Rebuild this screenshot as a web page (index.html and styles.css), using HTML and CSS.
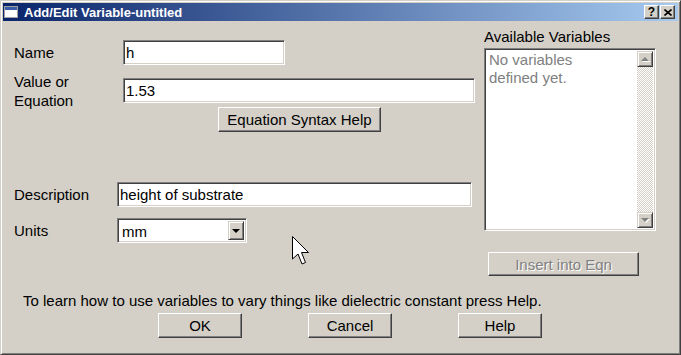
FILE: index.html
```html
<!DOCTYPE html>
<html lang="en">
<head>
    <meta charset="UTF-8">
    <meta name="viewport" content="width=device-width, initial-scale=1.0">
    <title>Add/Edit Variable-untitled</title>
    <link rel="stylesheet" href="styles.css">
</head>
<body>
    <div class="window">
        <!-- Barre de titre -->
        <div class="titlebar">
            <svg class="app-icon" width="14" height="12" viewBox="0 0 14 12">
                <rect x="0.5" y="0.5" width="13" height="11" fill="#fff" stroke="#a0a0a0"/>
                <rect x="1" y="1" width="12" height="3" fill="#3a5fa8"/>
            </svg>
            <span class="title">Add/Edit Variable-untitled</span>
            <div class="title-buttons">
                <button class="tb-btn tb-help">?</button>
                <button class="tb-btn">
                    <svg width="8" height="7" viewBox="0 0 8 7">
                        <path d="M0.5 0.5 L7.5 6.5 M7.5 0.5 L0.5 6.5" stroke="#000" stroke-width="1.6"/>
                    </svg>
                </button>
            </div>
        </div>

        <div class="main">
            <!-- Formulaire -->
            <div class="form">
                <div class="field-row">
                    <label class="label">Name</label>
                    <input class="field name-field" value="h">
                </div>
                <div class="field-row value-row">
                    <label class="label two-lines">Value or<br>Equation</label>
                    <input class="field value-field" value="1.53">
                </div>
                <div class="syntax-row">
                    <button class="btn syntax-btn">Equation Syntax Help</button>
                </div>
                <div class="field-row desc-row">
                    <label class="label short">Description</label>
                    <input class="field desc-field" value="height of substrate">
                </div>
                <div class="field-row units-row">
                    <label class="label short">Units</label>
                    <div class="select">
                        <span class="select-value">mm</span>
                        <span class="select-btn"><span class="arrow-down"></span></span>
                    </div>
                </div>
            </div>

            <!-- Variables disponibles -->
            <div class="vars">
                <div class="vars-label">Available Variables</div>
                <div class="listbox">
                    <div class="list-text">No variables<br>defined yet.</div>
                    <div class="scrollbar">
                        <span class="sb-btn"><span class="arrow-up gray"></span></span>
                        <span class="sb-track"></span>
                        <span class="sb-btn"><span class="arrow-down gray"></span></span>
                    </div>
                </div>
                <button class="btn insert-btn" disabled>Insert into Eqn</button>
            </div>
        </div>

        <p class="hint">To learn how to use variables to vary things like dielectric constant press Help.</p>

        <div class="actions">
            <button class="btn action-btn">OK</button>
            <button class="btn action-btn">Cancel</button>
            <button class="btn action-btn">Help</button>
        </div>

        <!-- Pointeur de souris -->
        <svg class="cursor" width="19" height="30" viewBox="0 0 19 30">
            <path d="M0.5 0.5 L0.5 23 L6 18 L10 28 L13.5 26.5 L9.5 16.5 L16.5 16.5 Z" fill="#fff" stroke="#000" stroke-width="1"/>
        </svg>
    </div>
</body>
</html>
```

FILE: styles.css
```css
* {
    box-sizing: border-box;
}
body {
    margin: 0;
    background-color: #d4d0c8;
}
.window {
    position: relative;
    width: 681px;
    height: 355px;
    padding: 2px;
    overflow: hidden;
    background-color: #d4d0c8;
    border: 1px solid;
    border-color: #d4d0c8 #404040 #404040 #d4d0c8;
    box-shadow: inset 1px 1px #fff, inset -1px -1px #808080;
    font-family: "Liberation Sans", Arial, sans-serif;
    font-size: 15px;
    line-height: 17px;
    color: #000;
}

/* Barre de titre */
.titlebar {
    display: flex;
    align-items: center;
    height: 18px;
    padding: 0 3px 0 1px;
    background: linear-gradient(to right, #0a246a, #a6caf0);
}
.app-icon {
    flex: none;
    margin-right: 6px;
}
.title {
    color: white;
    font-weight: bold;
    font-size: 13px;
}
.title-buttons {
    margin-left: auto;
    display: flex;
    gap: 1px;
}
.tb-btn {
    width: 15px;
    height: 14px;
    padding: 0;
    display: flex;
    align-items: center;
    justify-content: center;
    background-color: #d4d0c8;
    border: 1px solid;
    border-color: #fff #404040 #404040 #fff;
    box-shadow: inset -1px -1px #808080;
    font-family: "Liberation Sans", Arial, sans-serif;
    font-weight: bold;
    font-size: 12px;
    line-height: 12px;
    color: black;
}

/* Boutons et champs */
.btn {
    padding: 0;
    background-color: #d4d0c8;
    border: 1px solid;
    border-color: #fff #404040 #404040 #fff;
    box-shadow: inset -1px -1px #808080;
    font-family: inherit;
    font-size: 15px;
    color: black;
}
.btn:disabled {
    color: #808080;
    text-shadow: 1px 1px #fff;
}
.sunken {
    border: 1px solid;
}
.field, .select, .listbox {
    background-color: white;
    border: 1px solid;
    border-color: #808080 #fff #fff #808080;
    box-shadow: inset 1px 1px #404040, inset -1px -1px #d4d0c8;
}
.field {
    height: 25px;
    padding: 0 2px;
    margin: 0;
    font-family: inherit;
    font-size: 15px;
    color: black;
    outline: none;
}

/* Disposition principale */
.main {
    display: flex;
}
.form {
    width: 461px;
    margin-left: 11px;
    padding-top: 19px;
}
.field-row {
    display: flex;
    align-items: center;
    height: 25px;
}
.label {
    width: 109px;
    flex: none;
}
.label.short {
    width: 103px;
}
.value-row {
    margin-top: 13px;
    align-items: flex-start;
}
.two-lines {
    line-height: 19px;
    margin-top: -6px;
}
.name-field {
    width: 162px;
}
.value-field {
    width: 352px;
}
.syntax-row {
    margin: 4px 0 0 204px;
}
.syntax-btn {
    width: 163px;
    height: 25px;
}
.desc-row {
    margin-top: 50px;
}
.desc-field {
    width: 355px;
}
.units-row {
    margin-top: 11px;
}

/* Liste déroulante */
.select {
    display: flex;
    width: 130px;
    height: 25px;
    padding: 2px;
}
.select-value {
    flex: 1;
    padding-left: 2px;
    line-height: 21px;
}
.select-btn {
    width: 16px;
    display: flex;
    align-items: center;
    justify-content: center;
    background-color: #d4d0c8;
    border: 1px solid;
    border-color: #d4d0c8 #404040 #404040 #d4d0c8;
    box-shadow: inset 1px 1px #fff, inset -1px -1px #808080;
}
.arrow-down, .arrow-up {
    width: 0;
    height: 0;
    border-left: 4px solid transparent;
    border-right: 4px solid transparent;
}
.arrow-down {
    border-top: 4px solid #000;
}
.arrow-up {
    border-bottom: 4px solid #000;
}
.arrow-down.gray {
    border-top-color: #808080;
    filter: drop-shadow(1px 1px 0 #fff);
}
.arrow-up.gray {
    border-bottom-color: #808080;
    filter: drop-shadow(1px 1px 0 #fff);
}

/* Variables disponibles */
.vars {
    margin-left: 9px;
    padding-top: 7px;
}
.listbox {
    display: flex;
    width: 172px;
    height: 183px;
    margin-top: 3px;
    padding: 2px;
}
.list-text {
    flex: 1;
    padding-left: 2px;
    line-height: 18px;
    color: #808080;
}
.scrollbar {
    width: 16px;
    display: flex;
    flex-direction: column;
}
.sb-btn {
    height: 16px;
    display: flex;
    align-items: center;
    justify-content: center;
    background-color: #d4d0c8;
    border: 1px solid;
    border-color: #d4d0c8 #404040 #404040 #d4d0c8;
    box-shadow: inset 1px 1px #fff, inset -1px -1px #808080;
}
.sb-track {
    flex: 1;
    background: repeating-conic-gradient(#d4d0c8 0 25%, #fff 0 50%) 0 0 / 2px 2px;
}
.insert-btn {
    width: 151px;
    height: 24px;
    margin: 21px 0 0 4px;
}

/* Bas de la fenêtre */
.hint {
    margin: 16px 0 0 20px;
}
.actions {
    display: flex;
    gap: 66px;
    margin: 4px 0 0 155px;
}
.action-btn {
    width: 84px;
    height: 25px;
}
.cursor {
    position: absolute;
    left: 291px;
    top: 235px;
}
```
